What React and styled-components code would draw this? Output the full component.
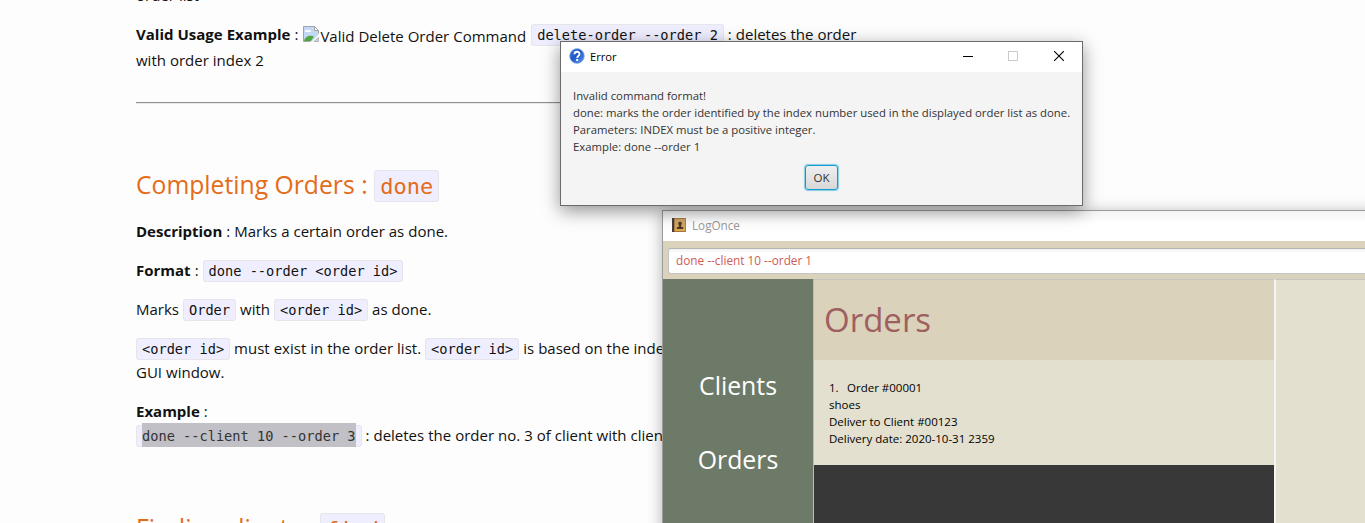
import React from 'react';
import styled, { createGlobalStyle } from 'styled-components';

const UI = '"Open Sans", "Noto Sans", sans-serif';

const GlobalStyle = createGlobalStyle`
  *, *::before, *::after { box-sizing: border-box; }
  html, body { margin: 0; height: 100%; overflow: hidden; background: #fdfdfd; }
`;

const Screen = styled.div`
  position: relative;
  height: 523px;
  overflow: hidden;
  background: #fdfdfd;
  font-family: ${UI};
`;

/* ---------- documentation page ---------- */

const Article = styled.article`
  width: 736px;
  margin: -17px 0 0 136px;
  color: #111;
  font-size: 15px;
  line-height: 24px;
  white-space: nowrap;
  word-spacing: 0.1px;
`;

const Paragraph = styled.p`
  margin: 0 0 15px;
`;

const Rule = styled.hr`
  margin: 30px 0 66px;
  border: 0;
  border-top: 1px solid #8f8f8f;
  border-bottom: 1px solid #eaeaea;
`;

const Heading = styled.h2`
  margin: 0 0 19px;
  height: 30px;
  color: #e46c18;
  font-size: 24.7px;
  font-weight: 400;
  line-height: 30px;
`;

const NextHeading = styled(Heading)`
  margin-top: 66px;
`;

const Code = styled.code`
  padding: 2px 5px;
  border: 1px solid #e6e6ea;
  border-radius: 3px;
  background: #eeeeff;
  font-family: "DejaVu Sans Mono", monospace;
  font-size: 13.65px;
  line-height: 0;
  word-spacing: 0;

  ${Heading} & {
    padding: 3px 5px 2px;
    font-size: 22px;
  }
`;

const Selected = styled.span`
  padding: 5px 0 3px;
  background: #c0c0c6;
  color: #333;
`;

const MissingImage = styled.span`
  display: inline-flex;
  margin: 0 1px;
  vertical-align: -2px;

  svg { flex: none; margin: 2px 1px 0 0; }
`;

/* ---------- windows ---------- */

const Window = styled.section`
  position: absolute;
  display: flex;
  flex-direction: column;
`;

const AppWindow = styled(Window)`
  left: 662px;
  top: 210px;
  width: 760px;
  height: 380px;
  border: 1px solid #9c9c9c;
  background: #fff;
  box-shadow: 0 2px 14px rgba(0, 0, 0, 0.3);
`;

const Dialog = styled(Window)`
  left: 560px;
  top: 41px;
  width: 523px;
  height: 165px;
  border: 1px solid #6b6b6b;
  background: #f4f4f4;
  box-shadow: 0 5px 17px rgba(0, 0, 0, 0.42);
`;

const TitleBar = styled.header`
  display: flex;
  flex: none;
  align-items: center;
  height: 30px;
  padding: 0 0 2px 8px;
  gap: ${(p) => p.$gap}px;
  color: ${(p) => p.$color};
  background: ${(p) => p.$background};
  font-size: ${(p) => p.$size}px;
`;

const WindowControls = styled.div`
  display: flex;
  gap: 35px;
  margin: 0 18px 0 auto;

  svg:last-child { margin-left: 1px; }
`;

const Message = styled.p`
  margin: 15px 0 10px 12px;
  color: #333;
  font-size: 11.33px;
  line-height: 17px;
  white-space: pre;
`;

const OkButton = styled.button`
  align-self: center;
  width: 33px;
  height: 25px;
  padding: 0;
  border: 1px solid #0f9ad0;
  border-radius: 3px;
  background: linear-gradient(#efefef, #d8d8d8);
  box-shadow: 0 0 1px 1px rgba(3, 158, 211, 0.45);
  color: #333;
  font: 11.5px ${UI};
`;

const CommandBar = styled.div`
  flex: none;
  height: 38px;
  padding: 7px 0 5px 5px;
  background: #dad2ba;
`;

const CommandInput = styled.div`
  height: 26px;
  padding-left: 7px;
  border: 1px solid #c4c4c6;
  border-top-color: #b4b4b4;
  border-radius: 3px;
  background: linear-gradient(#f0f0f0, #fff 4px);
  color: #d05c54;
  font-size: 11.8px;
  line-height: 23px;
`;

const Panes = styled.div`
  display: grid;
  flex: 1;
  grid-template-columns: 150px 461px 1fr;
`;

const Sidebar = styled.nav`
  display: flex;
  flex-direction: column;
  align-items: center;
  padding-top: 88px;
  gap: 38px;
  background: #6e7a68;
  color: #fff;
  font-size: 24.8px;
  line-height: 36px;
`;

const OrdersPane = styled.div`
  display: flex;
  flex-direction: column;
  border-left: 1px solid #b9bcae;
  background: #383838;
`;

const PaneTitle = styled.h1`
  height: 81px;
  margin: 0;
  padding-left: 10px;
  border-top: 1px solid #c5c4bf;
  background: #dad2ba;
  color: #a05f5f;
  font-size: 33px;
  font-weight: 400;
  line-height: 80px;
`;

const OrderCard = styled.div`
  height: 105px;
  padding: 19px 0 0 15px;
  background: #e3e0cf;
  color: #000;
  font-size: 11.5px;
  line-height: 17px;
`;

const OrderLine = styled.div`
  display: flex;
  white-space: nowrap;
`;

const OrderIndex = styled.span`
  width: 18px;
`;

const DetailPane = styled.div`
  border-top: 1px solid #c5c4bf;
  border-left: 2px solid #f4f4f4;
  background: #e3e0cf;
`;

/* ---------- icons ---------- */

const BrokenImageIcon = () => (
  <svg width="16" height="16" viewBox="0 0 16 16">
    <path d="M.5 15.500V.5h11l4 4v4L9 15.500z" fill="#c3d8f5" />
    <path d="M2 6c0-2 2-2.400 3-1.500C6 3 8 3.500 8 6z" fill="#fff" />
    <path d="M1 15c1-4 5-6.500 10-4.500L8 15z" fill="#4fa83d" />
    <path d="M.5 15.500V.5h11l4 4v3M.5 15.500H7" fill="none" stroke="#a3a3a3" />
    <path d="M11.500 .5v4h4z" fill="#fff" stroke="#a3a3a3" />
    <path d="M15.500 11.500v4H11z" fill="#c3d8f5" stroke="#a3a3a3" strokeWidth=".8" />
  </svg>
);

const QuestionIcon = () => (
  <svg width="16" height="16" viewBox="0 0 16 16">
    <defs>
      <linearGradient id="ball" x1="0" y1="0" x2="1" y2="1">
        <stop offset="0" stopColor="#3c78dc" />
        <stop offset=".45" stopColor="#2158c8" />
        <stop offset="1" stopColor="#5a9cf0" />
      </linearGradient>
    </defs>
    <circle cx="8" cy="8" r="7.400" fill="url(#ball)" stroke="#9db5e0" strokeWidth=".7" />
    <path d="M5.500 6.200C5.500 2.900 10.600 3 10.500 6c0 1.800-2.300 1.900-2.300 3.900" fill="none" stroke="#fff" strokeWidth="1.800" />
    <rect x="7.200" y="11" width="2" height="2" fill="#fff" />
  </svg>
);

const AddressBookIcon = () => (
  <svg width="15" height="14" viewBox="-1 0 15 14">
    <defs>
      <linearGradient id="cover" x1="0" y1="0" x2="0" y2="1">
        <stop offset="0" stopColor="#cda46a" />
        <stop offset="1" stopColor="#e0aa4c" />
      </linearGradient>
    </defs>
    <rect width="14" height="14" rx=".6" fill="#a5793c" />
    <rect x="2.500" y="1" width="10.700" height="12" fill="url(#cover)" />
    <rect width="2.200" height="14" fill="#4a3c3c" />
    <path d="M8 3.700a1.900 1.900 0 0 1 1 3.500v1.300l2.200.7V11H4.800V9.200L7 8.500V7.200a1.900 1.900 0 0 1 1-3.500z" fill="#4b3a2a" />
  </svg>
);

const MinimizeIcon = () => (
  <svg width="10" height="10" viewBox="0 0 10 10">
    <path d="M0 5.500h10" stroke="#000" />
  </svg>
);

const MaximizeIcon = () => (
  <svg width="10" height="10" viewBox="0 0 10 10">
    <rect x=".5" y=".5" width="9" height="9" fill="none" stroke="#ccc" />
  </svg>
);

const CloseIcon = () => (
  <svg width="10" height="10" viewBox="0 0 10 10">
    <path d="M0 0l10 10M10 0L0 10" stroke="#000" strokeWidth="1.100" />
  </svg>
);

/* ---------- content ---------- */

const message = [
  'Invalid command format!',
  'done: marks the order identified by the index number used in the displayed order list as done.',
  'Parameters: INDEX must be a positive integer.',
  'Example: done --order 1',
].join('\n');

export default function App() {
  return (
    <Screen>
      <GlobalStyle />
      <Article>
        <Paragraph>order list</Paragraph>
        <Paragraph>
          <b>Valid Usage Example</b> :{' '}
          <MissingImage><BrokenImageIcon />Valid Delete Order Command</MissingImage>{' '}
          <Code>delete-order --order 2</Code> : deletes the order<br />
          with order index 2
        </Paragraph>
        <Rule />
        <Heading>Completing Orders : <Code>done</Code></Heading>
        <Paragraph><b>Description</b> : Marks a certain order as done.</Paragraph>
        <Paragraph><b>Format</b> : <Code>done --order &lt;order id&gt;</Code></Paragraph>
        <Paragraph>Marks <Code>Order</Code> with <Code>&lt;order id&gt;</Code> as done.</Paragraph>
        <Paragraph>
          <Code>&lt;order id&gt;</Code> must exist in the order list.{' '}
          <Code>&lt;order id&gt;</Code> is based on the index<br />
          GUI window.
        </Paragraph>
        <Paragraph>
          <b>Example</b> :<br />
          <Code><Selected>done --client 10 --order 3</Selected></Code> : deletes the order no. 3 of client with client
        </Paragraph>
        <NextHeading>Finding clients : <Code>find</Code></NextHeading>
      </Article>

      <AppWindow>
        <TitleBar $gap={6} $size={11.7} $color="#999" $background="linear-gradient(#f4f4f4, #fff 12px)">
          <AddressBookIcon />
          LogOnce
        </TitleBar>
        <CommandBar>
          <CommandInput>done --client 10 --order 1</CommandInput>
        </CommandBar>
        <Panes>
          <Sidebar>
            <span>Clients</span>
            <span>Orders</span>
          </Sidebar>
          <OrdersPane>
            <PaneTitle>Orders</PaneTitle>
            <OrderCard>
              <OrderLine><OrderIndex>1.</OrderIndex>Order #00001</OrderLine>
              <OrderLine>shoes</OrderLine>
              <OrderLine>Deliver to Client #00123</OrderLine>
              <OrderLine>Delivery date: 2020-10-31 2359</OrderLine>
            </OrderCard>
          </OrdersPane>
          <DetailPane />
        </Panes>
      </AppWindow>

      <Dialog>
        <TitleBar $gap={5} $size={11.2} $color="#000" $background="#fff">
          <QuestionIcon />
          Error
          <WindowControls>
            <MinimizeIcon />
            <MaximizeIcon />
            <CloseIcon />
          </WindowControls>
        </TitleBar>
        <Message>{message}</Message>
        <OkButton>OK</OkButton>
      </Dialog>
    </Screen>
  );
}
